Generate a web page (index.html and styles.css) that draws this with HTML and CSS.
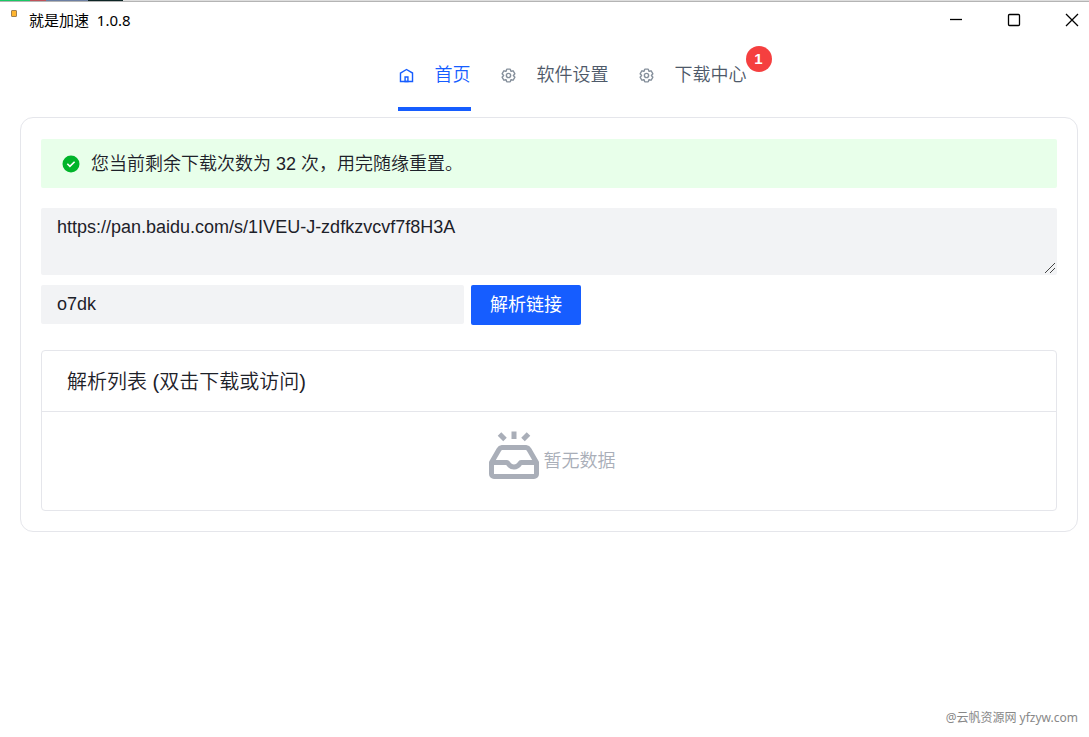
FILE: index.html
```html
<!DOCTYPE html>
<html lang="zh-CN">
<head>
<meta charset="utf-8">
<meta name="viewport" content="width=device-width, initial-scale=1">
<title>就是加速 1.0.8</title>
<link rel="stylesheet" href="styles.css">
</head>
<body>
<div class="desktop-strip"></div>
<header class="titlebar">
  <span class="app-icon"></span>
  <h1 class="app-title">就是加速&nbsp; 1.0.8</h1>
  <div class="window-controls">
    <button type="button" class="window-button" aria-label="最小化"><svg width="14" height="14" viewBox="0 0 14 14"><path d="M1 6.5h12"/></svg></button>
    <button type="button" class="window-button" aria-label="最大化"><svg width="14" height="14" viewBox="0 0 14 14"><rect x="1.5" y="1.5" width="11" height="11" rx="1"/></svg></button>
    <button type="button" class="window-button" aria-label="关闭"><svg width="14" height="14" viewBox="0 0 14 14"><path d="M1 1l12 12M13 1L1 13"/></svg></button>
  </div>
</header>
<nav class="tabs">
  <a class="tab tab-active" href="#home">
    <svg class="tab-icon" viewBox="0 0 48 48"><path d="M7 17L24 7l17 10v24H7V17Z"/><path d="M20 28h8v13h-8V28Z"/></svg>
    <span>首页</span>
  </a>
  <a class="tab" href="#settings">
    <svg class="tab-icon" viewBox="0 0 48 48"><path d="M18.797 6.732A1 1 0 0 1 19.76 6h8.48a1 1 0 0 1 .964.732l1.285 4.628a1 1 0 0 0 1.213.7l4.651-1.2a1 1 0 0 1 1.116.468l4.24 7.344a1 1 0 0 1-.153 1.2L38.193 23.3a1 1 0 0 0 0 1.402l3.364 3.427a1 1 0 0 1 .153 1.2l-4.24 7.344a1 1 0 0 1-1.116.468l-4.65-1.2a1 1 0 0 0-1.214.7l-1.285 4.628a1 1 0 0 1-.964.732h-8.48a1 1 0 0 1-.963-.732L17.51 36.64a1 1 0 0 0-1.213-.7l-4.65 1.2a1 1 0 0 1-1.116-.468l-4.24-7.344a1 1 0 0 1 .153-1.2L9.809 24.7a1 1 0 0 0 0-1.402l-3.364-3.427a1 1 0 0 1-.153-1.2l4.24-7.344a1 1 0 0 1 1.116-.468l4.65 1.2a1 1 0 0 0 1.213-.7l1.286-4.628Z"/><circle cx="24" cy="24" r="6"/></svg>
    <span>软件设置</span>
  </a>
  <a class="tab" href="#downloads">
    <svg class="tab-icon" viewBox="0 0 48 48"><path d="M18.797 6.732A1 1 0 0 1 19.76 6h8.48a1 1 0 0 1 .964.732l1.285 4.628a1 1 0 0 0 1.213.7l4.651-1.2a1 1 0 0 1 1.116.468l4.24 7.344a1 1 0 0 1-.153 1.2L38.193 23.3a1 1 0 0 0 0 1.402l3.364 3.427a1 1 0 0 1 .153 1.2l-4.24 7.344a1 1 0 0 1-1.116.468l-4.65-1.2a1 1 0 0 0-1.214.7l-1.285 4.628a1 1 0 0 1-.964.732h-8.48a1 1 0 0 1-.963-.732L17.51 36.64a1 1 0 0 0-1.213-.7l-4.65 1.2a1 1 0 0 1-1.116-.468l-4.24-7.344a1 1 0 0 1 .153-1.2L9.809 24.7a1 1 0 0 0 0-1.402l-3.364-3.427a1 1 0 0 1-.153-1.2l4.24-7.344a1 1 0 0 1 1.116-.468l4.65 1.2a1 1 0 0 0 1.213-.7l1.286-4.628Z"/><circle cx="24" cy="24" r="6"/></svg>
    <span>下载中心</span>
    <span class="badge">1</span>
  </a>
</nav>
<main class="card">
  <div class="alert" role="status">
    <svg class="alert-icon" viewBox="0 0 18 18"><circle cx="9" cy="9" r="8.5" fill="#00b42a"/><path d="M5.3 8.8l2.6 2.6 4.7-4.7" fill="none" stroke="#fff" stroke-width="1.6"/></svg>
    <span>您当前剩余下载次数为 32 次，用完随缘重置。</span>
  </div>
  <form class="link-form">
    <textarea class="field link-input" aria-label="链接" spellcheck="false">https://pan.baidu.com/s/1IVEU-J-zdfkzvcvf7f8H3A</textarea>
    <div class="code-row">
      <input class="field code-input" type="text" aria-label="提取码" value="o7dk">
      <button class="primary" type="button">解析链接</button>
    </div>
  </form>
  <section class="panel">
    <h2 class="panel-title">解析列表 (双击下载或访问)</h2>
    <div class="empty">
      <svg class="empty-icon" viewBox="0 0 50 48"><path d="M2.500 31.500V43A2.500 2.500 0 0 0 5 45.500h40a2.500 2.500 0 0 0 2.500-2.500V31.500L40 18.500a4 4 0 0 0-3-2H13a4 4 0 0 0-3 2ZM2.500 31.500H18c1.500 0 1.500 4.500 7 4.500s5.500-4.500 7-4.500h15.500"/><path d="M25 .5V8M10.500 3l5.500 5.500M39.500 3L34 8.500"/></svg>
      <span>暂无数据</span>
    </div>
  </section>
</main>
<footer class="credit">@云帆资源网 yfzyw.com</footer>
</body>
</html>
```
FILE: styles.css
```css
* {
  box-sizing: border-box;
}

body {
  margin: 0;
  min-height: 100vh;
  display: flex;
  flex-direction: column;
  background: #fff;
  color: #1d2129;
  font-family: "Liberation Sans", "Noto Sans CJK SC", sans-serif;
  font-size: 18px;
  font-weight: 350;
  line-height: 28px;
}

.desktop-strip {
  height: 2px;
  border-bottom: 1px solid #b4b4b4;
  background: linear-gradient(90deg, #18c964 30px, #c0525a 30px 46px, #6c7fa3 46px 88px, #0c2424 88px 123px, #dedede 123px);
}

.titlebar {
  display: flex;
  align-items: center;
  height: 36px;
  margin-bottom: 1px;
  padding-left: 11px;
}

.app-icon {
  align-self: flex-start;
  width: 6px;
  height: 7px;
  margin: 8px 12px 0 0;
  border: 1px solid #a08050;
  border-radius: 1px;
  background: #ffb52e;
}

.app-title {
  margin: 0;
  color: #000;
  font-family: "Noto Sans", "Noto Sans CJK SC", sans-serif;
  font-size: 15px;
  font-weight: 400;
}

.window-controls {
  display: flex;
  gap: 14px;
  margin-left: auto;
  margin-right: -5px;
}

.window-button {
  display: grid;
  place-items: center;
  width: 44px;
  height: 36px;
  padding: 0;
  border: 0;
  background: none;
}

.window-button svg {
  fill: none;
  stroke: #000;
  stroke-width: 1.3;
}

.tabs {
  display: flex;
  justify-content: center;
  gap: 29px;
  padding-left: 55px;
}

.tab {
  position: relative;
  display: flex;
  align-items: center;
  gap: 20px;
  height: 72px;
  border-bottom: 4px solid transparent;
  border-top: 4px solid transparent;
  color: #4e5969;
  text-decoration: none;
}

.tab-active {
  border-bottom-color: #165dff;
  color: #165dff;
}

.tab-icon {
  width: 17px;
  height: 17px;
  fill: none;
  stroke: #86909c;
  stroke-width: 4;
}

.tab-active .tab-icon {
  stroke: #165dff;
}

.badge {
  position: absolute;
  top: 3px;
  right: -25px;
  width: 26px;
  height: 26px;
  border-radius: 50%;
  background: #f53f3f;
  color: #fff;
  font-size: 15px;
  font-weight: 700;
  line-height: 26px;
  text-align: center;
}

.card {
  margin: 6px 11px 0 20px;
  padding: 21px 20px 20px;
  border: 1px solid #e5e6eb;
  border-radius: 13px;
}

.alert {
  display: flex;
  align-items: center;
  gap: 11px;
  min-height: 49px;
  padding: 0 21px;
  border-radius: 2px;
  background: #e8ffea;
}

.alert-icon {
  width: 18px;
  height: 18px;
}

.link-form {
  margin: 20px 0 25px;
}

.field {
  display: block;
  padding: 5px 16px;
  border: 0;
  border-radius: 2px;
  background: #f2f3f5;
  color: #1d2129;
  font: inherit;
}

.link-input {
  width: 100%;
  height: 67px;
  resize: vertical;
}

.link-input::-webkit-resizer {
  background: url("data:image/svg+xml,%3Csvg xmlns='http://www.w3.org/2000/svg' width='15' height='15' viewBox='0 0 15 15'%3E%3Cpath d='M3 13L13 3M8 13l5-5' stroke='%23444' fill='none'/%3E%3C/svg%3E") right bottom no-repeat;
}

.code-row {
  display: flex;
  align-items: flex-start;
  gap: 7px;
  margin-top: 10px;
}

.code-input {
  width: 423px;
  height: 39px;
}

.primary {
  height: 40px;
  padding: 0 19px;
  border: 0;
  border-radius: 2px;
  background: #165dff;
  color: #fff;
  font: inherit;
  font-weight: 400;
}

.panel {
  border: 1px solid #e5e6eb;
  border-radius: 4px;
}

.panel-title {
  margin: 0;
  padding: 17px 25px 15px;
  border-bottom: 1px solid #e5e6eb;
  font-size: 20px;
  font-weight: 350;
}

.empty {
  display: flex;
  align-items: center;
  justify-content: center;
  gap: 5px;
  padding: 19px 0 31px 6px;
  color: #a9aeb8;
}

.empty-icon {
  width: 50px;
  height: 48px;
  fill: none;
  stroke: currentColor;
  stroke-width: 5;
  stroke-linejoin: round;
}

.empty span {
  padding-top: 12px;
}

.credit {
  margin-top: auto;
  padding: 0 11px 9px;
  color: #888;
  font-family: "Noto Sans", "Noto Sans CJK SC", sans-serif;
  font-size: 12px;
  font-weight: 400;
  line-height: 20px;
  text-align: right;
}
```
